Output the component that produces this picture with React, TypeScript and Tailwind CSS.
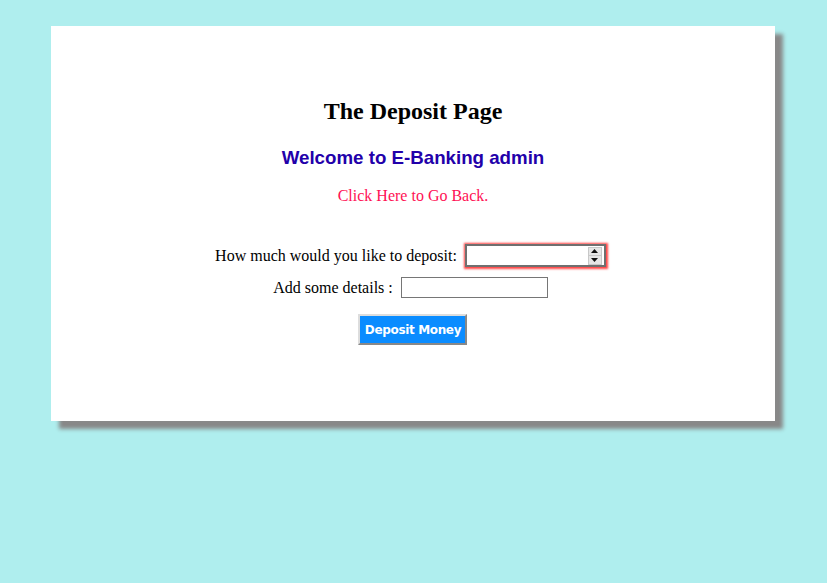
export default function App() {
  return (
    <div className="min-h-[583px] w-full bg-[#afeeee] pt-[26px] pl-[51px]">
      <div className="flex h-[395px] w-[724px] flex-col items-center bg-white pt-[71px] shadow-[8px_8px_4px_#888888]">
        <h2 className="text-[24px] leading-[28px] font-bold text-black [font-family:'Liberation_Serif',serif]">
          The Deposit Page
        </h2>
        <h3 className="mt-[22px] text-[18.72px] leading-[22px] font-bold text-[#2200aa] [font-family:'Liberation_Sans',Arial,sans-serif]">
          Welcome to E-Banking admin
        </h3>
        <a className="mt-[18px] cursor-pointer text-[16px] leading-[18px] text-[#ff1155] [font-family:'Liberation_Serif',serif]">
          Click Here to Go Back.
        </a>
        <form className="mt-[39px] flex flex-col items-center [font-family:'Liberation_Serif',serif] text-[16px] leading-[18px] text-black">
          <div className="flex items-center pr-[5px]">
            <label className="mr-[8px]">How much would you like to deposit:</label>
            <div className="flex h-[23px] w-[141px] items-center border-2 border-[#6f6f6f] bg-white shadow-[0_0_2px_1.5px_#ff4444]">
              <input className="h-full min-w-0 flex-1 bg-transparent outline-none" aria-label="amount" />
              <div className="mr-[2px] flex h-[18px] w-[14px] flex-col border border-[#c8c8c8] bg-[#e6e6e6]">
                <div className="flex flex-1 items-center justify-center border-b border-[#c8c8c8]">
                  <svg width="7" height="4" viewBox="0 0 7 4"><path d="M3.5 0 L7 4 L0 4 Z" fill="#111" /></svg>
                </div>
                <div className="flex flex-1 items-center justify-center">
                  <svg width="7" height="4" viewBox="0 0 7 4"><path d="M0 0 L7 0 L3.5 4 Z" fill="#111" /></svg>
                </div>
              </div>
            </div>
          </div>
          <div className="mt-[10px] flex items-center pr-[5px]">
            <label className="mr-[8px]">Add some details :</label>
            <input className="h-[21px] w-[147px] border border-[#767676] bg-white outline-none" aria-label="details" />
          </div>
          <button
            type="button"
            className="mt-[16px] h-[31px] w-[109px] border-2 border-t-[#dddddd] border-l-[#dddddd] border-r-[#888888] border-b-[#888888] bg-[#0a8cff] pt-[1px] text-[12px] font-bold tracking-[-0.35px] text-white [font-family:'DejaVu_Sans',Verdana,sans-serif]"
          >
            Deposit Money
          </button>
        </form>
      </div>
    </div>
  );
}
